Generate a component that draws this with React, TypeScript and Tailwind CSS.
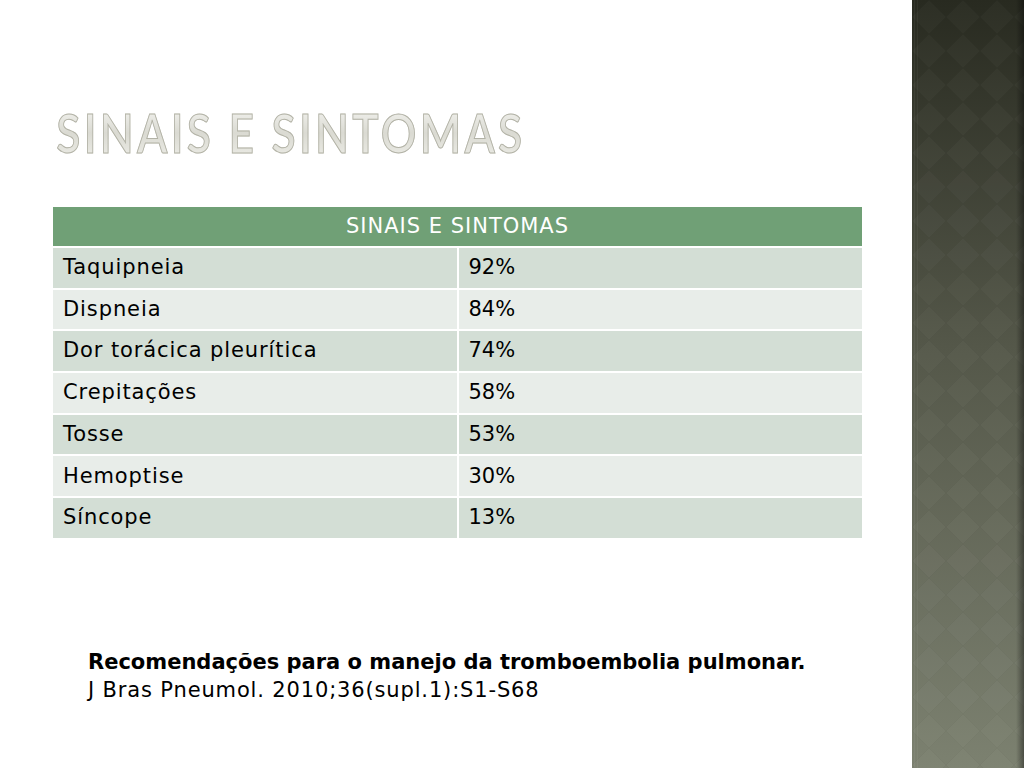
import React from 'react';

const rows: { label: string; value: string }[] = [
  { label: 'Taquipneia', value: '92%' },
  { label: 'Dispneia', value: '84%' },
  { label: 'Dor torácica pleurítica', value: '74%' },
  { label: 'Crepitações', value: '58%' },
  { label: 'Tosse', value: '53%' },
  { label: 'Hemoptise', value: '30%' },
  { label: 'Síncope', value: '13%' },
];

function SidebarPattern() {
  return (
    <svg className="h-full w-full" viewBox="0 0 112 768" preserveAspectRatio="none">
      <defs>
        <linearGradient id="side" x1="0" y1="0" x2="0" y2="1">
          <stop offset="0" stopColor="#282a20" />
          <stop offset="0.45" stopColor="#545749" />
          <stop offset="1" stopColor="#7c8170" />
        </linearGradient>
        <linearGradient id="edge" x1="0" y1="0" x2="1" y2="0">
          <stop offset="0" stopColor="#000" stopOpacity="0" />
          <stop offset="1" stopColor="#000" stopOpacity="0.4" />
        </linearGradient>
        <pattern id="diamonds" width="34" height="34" patternUnits="userSpaceOnUse">
          <path d="M17 0 L34 17 L17 34 L0 17 Z" fill="#ffffff" fillOpacity="0.025" />
          <path d="M17 0 L34 17 L17 34 L0 17 Z" fill="none" stroke="#000" strokeOpacity="0.03" strokeWidth="1" />
        </pattern>
      </defs>
      <rect width="112" height="768" fill="url(#side)" />
      <rect width="112" height="768" fill="url(#diamonds)" />
      <rect x="2" width="1" height="768" fill="#ffffff" fillOpacity="0.05" />
      <rect x="5" width="1" height="768" fill="#ffffff" fillOpacity="0.04" />
      <rect x="104" width="8" height="768" fill="url(#edge)" />
    </svg>
  );
}

export default function App() {
  return (
    <div className="flex h-[768px] w-[1024px] overflow-hidden bg-white">
      <div className="flex w-[912px] flex-col pl-[53px] pr-[50px]">
        <h1
          className="mt-[103px] h-[60px] origin-left scale-x-[0.82] bg-gradient-to-b from-[#f6f6f3] via-[#dadad2] to-[#eeeee8] bg-clip-text pl-[4px] text-[54px] leading-[60px] font-semibold tracking-[4px] whitespace-nowrap text-transparent [-webkit-text-stroke:1px_#b2b2a6]"
          style={{ fontFamily: 'Lato, "Open Sans", sans-serif' }}
        >
          SINAIS E SINTOMAS
        </h1>

        <div
          className="mt-[44px] flex w-[809px] flex-col gap-[2px] text-[21px] text-black"
          style={{ fontFamily: '"DejaVu Sans", Verdana, sans-serif' }}
        >
          <div className="flex h-[39px] items-center justify-center bg-[#70a076] tracking-[1px] text-white">
            SINAIS E SINTOMAS
          </div>
          {rows.map((row, i) => (
            <div key={row.label} className="grid h-[39.7px] grid-cols-2 gap-[2px]">
              <div
                className={
                  i % 2 === 0
                    ? 'flex items-center bg-[#d3ded5] px-[10px] tracking-[0.9px]'
                    : 'flex items-center bg-[#e8ede9] px-[10px] tracking-[0.9px]'
                }
              >
                {row.label}
              </div>
              <div
                className={
                  i % 2 === 0
                    ? 'flex items-center bg-[#d3ded5] px-[10px]'
                    : 'flex items-center bg-[#e8ede9] px-[10px]'
                }
              >
                {row.value}
              </div>
            </div>
          ))}
        </div>

        <div
          className="mt-[110px] pl-[35px] text-[21px] leading-[28px] text-black"
          style={{ fontFamily: '"DejaVu Sans", Verdana, sans-serif' }}
        >
          <p className="font-bold">Recomendações para o manejo da tromboembolia pulmonar.</p>
          <p className="tracking-[0.85px]">J Bras Pneumol. 2010;36(supl.1):S1-S68</p>
        </div>
      </div>
      <div className="h-[768px] w-[112px]">
        <SidebarPattern />
      </div>
    </div>
  );
}
